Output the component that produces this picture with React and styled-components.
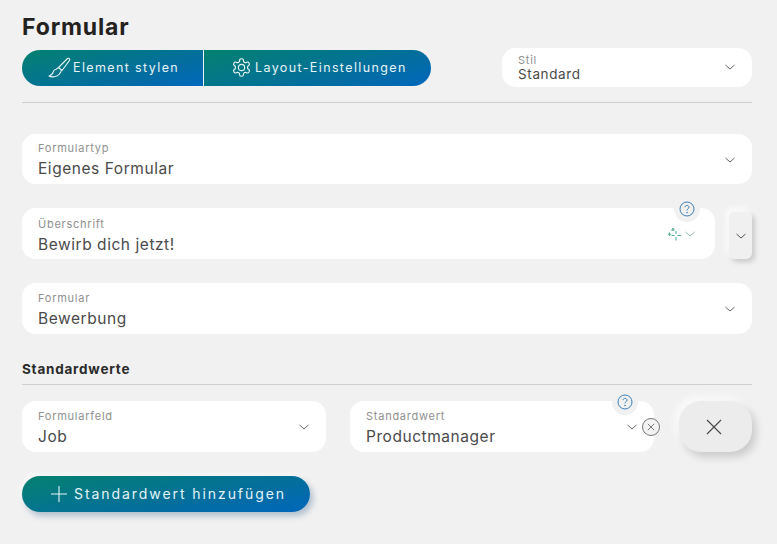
import React from "react";
import styled, { createGlobalStyle } from "styled-components";

const Global = createGlobalStyle`
  html, body { margin: 0; padding: 0; background: #f1f1f1; }
  body { font-family: Inter, "Open Sans", sans-serif; color: #3f3f3f; }
`;
const Page = styled.div`
  width: 777px; height: 544px; box-sizing: border-box; overflow: hidden;
  padding: 14px 25px 0 22px; display: flex; flex-direction: column; background: #f1f1f1;
`;
const Title = styled.h1`
  margin: 0; height: 26px; line-height: 26px; font-size: 23px; font-weight: 700; color: #242220; letter-spacing: .85px;
`;
const TopRow = styled.div`
  display: flex; justify-content: space-between; align-items: flex-start; margin-top: 8px;
`;
const Segments = styled.div`
  margin-top: 2px; display: flex; width: 409px; height: 36px; border-radius: 18px; overflow: hidden;
`;
const Segment = styled.button`
  flex: none; width: ${p => p.$w}px; height: 36px; border: 0; padding: 0 0 1px ${p => p.$pad}px;
  display: flex; align-items: center; gap: ${p => p.$gap}px; color: #e4f5f8; font: 400 12.5px Inter, sans-serif; letter-spacing: 1.38px;
  background: linear-gradient(165deg, #04816f 0%, #046f9b 60%, #0066bb 100%);
  & + & { border-left: 1px solid #e8f4f6; }
`;
const Field = styled.div`
  position: relative; box-sizing: border-box; width: ${p => p.$w ? p.$w + "px" : "100%"}; flex: none;
  height: ${p => p.$h || 51}px; background: #fff; border-radius: 14px;
  padding: ${p => p.$top}px 16px 0;
  display: flex; flex-direction: column;
`;
const Label = styled.span`
  font-size: 11px; line-height: 13px; color: #909090; letter-spacing: .75px;
`;
const Value = styled.span`
  margin-top: ${p => p.$compact ? 0 : 4}px; font-size: ${p => p.$compact ? 13.5 : 15.5}px; line-height: ${p => p.$compact ? 15 : 20}px; color: #4a4a4a; letter-spacing: ${p => p.$compact ? .62 : .55}px;
`;
const Chevron = styled.svg`
  position: absolute; right: ${p => p.$r}px; top: ${p => p.$t}px; width: 12px; height: 12px;
  fill: none; stroke: ${p => p.$c || "#666"}; stroke-width: 1;
`;
const Sparkle = styled.svg`
  position: absolute; right: 33px; top: 19px; width: 15px; height: 15px;
  fill: none; stroke: #4fa893; stroke-width: 1;
`;
const Rule = styled.div`
  height: 1px; background: #cfcfcf; margin-top: ${p => p.$mt}px; flex: none;
`;
const Stack = styled.div`
  margin-top: ${p => p.$mt}px; display: flex; align-items: flex-start;
`;
const Help = styled.div`
  position: absolute; width: 26px; height: 26px; right: ${p => p.$r}px; top: ${p => p.$t}px; border-radius: 50%;
  background: #f1f1f1; display: flex; align-items: center; justify-content: center;
`;
const SideButton = styled.button`
  margin-top: 4px; margin-left: 14px; width: 23px; height: 47px; border: 0; padding: 0; background: #f0f0f0;
  border-radius: 4px 5px 6px 5px; display: flex; align-items: center; justify-content: center;
  box-shadow: 3px 3px 5px rgba(0,0,0,.16), -3px -4px 6px rgba(255,255,255,.75);
`;
const Subheading = styled.h2`
  margin: 27px 0 0; font-size: 13.5px; line-height: 16px; font-weight: 700; color: #2a2a2a; letter-spacing: .78px;
`;
const SecondField = styled.div`
  margin-left: 24px;
`;
const CloseButton = styled.button`
  margin-left: 25px; width: 73px; height: 51px; border: 0; padding: 0 3px 0 0; background: #ececec; border-radius: 22px;
  display: flex; align-items: center; justify-content: center;
  box-shadow: 4px 5px 8px rgba(0,0,0,.16), -4px -4px 8px rgba(255,255,255,.7);
`;
const Clear = styled.svg`
  position: absolute; right: -7px; top: 16px; width: 20px; height: 20px; fill: #f3f3f3; stroke: #777; stroke-width: 1;
`;
const AddButton = styled.button`
  margin-top: 24px; align-self: flex-start; width: 288px; height: 36px; border: 0; padding: 0 0 1px 28px; border-radius: 18px;
  display: flex; align-items: center; gap: 6px; color: #e2f4f9; font: 400 14px Inter, sans-serif; letter-spacing: 1.93px;
  background: linear-gradient(170deg, #04816f 0%, #046f9b 60%, #0066bb 100%);
  box-shadow: 3px 4px 6px rgba(0,60,110,.28), -2px -2px 5px rgba(255,255,255,.7);
`;

const Chev = ({ r, t, c }) => (
  <Chevron $r={r} $t={t} $c={c} viewBox="0 0 12 12"><path d="M1.500 4 6 8l4.500-4" /></Chevron>
);
const HelpIcon = () => (
  <svg width="16" height="16" viewBox="0 0 16 16" fill="none" stroke="#3d7fb8" strokeWidth="1">
    <circle cx="8" cy="8" r="7" />
    <path d="M6 6.200C6 5 7 4.400 8 4.400s2 .7 2 1.800c0 1.500-2 1.500-2 3.200" />
    <circle cx="8" cy="11.500" r=".4" />
  </svg>
);

export default function App() {
  return (
    <Page>
      <Global />
      <Title>Formular</Title>
      <TopRow>
        <Segments>
          <Segment $w={181} $pad={25} $gap={2}>
            <svg width="24" height="22" viewBox="0 0 24 22" fill="none" stroke="#e8f6f8" strokeWidth="1.100" strokeLinejoin="round">
              <path d="M20.500 1.500c1.500-.8 2.800.6 2 2L15 13.500l-3.500-3z" />
              <path d="M11.500 10.500 9.500 12c-2 .4-3 1.600-3.400 3.200C5.600 17 4 18.500 2 19c3 1.500 8 1 10-1.500 1.200-1.300 2-2.600 2.500-4.300" />
            </svg>
            Element stylen
          </Segment>
          <Segment $w={228} $pad={27} $gap={3}>
            <svg width="21" height="21" viewBox="0 0 24 24" fill="none" stroke="#e8f6f8" strokeWidth="1.300" strokeLinejoin="round">
              <path d="M12.220 2h-.44a2 2 0 0 0-2 2v.18a2 2 0 0 1-1 1.730l-.43.25a2 2 0 0 1-2 0l-.15-.08a2 2 0 0 0-2.730.73l-.22.38a2 2 0 0 0 .73 2.730l.15.1a2 2 0 0 1 1 1.720v.51a2 2 0 0 1-1 1.740l-.15.09a2 2 0 0 0-.73 2.730l.22.38a2 2 0 0 0 2.730.73l.15-.08a2 2 0 0 1 2 0l.43.25a2 2 0 0 1 1 1.730V20a2 2 0 0 0 2 2h.44a2 2 0 0 0 2-2v-.18a2 2 0 0 1 1-1.730l.43-.25a2 2 0 0 1 2 0l.15.08a2 2 0 0 0 2.730-.73l.22-.39a2 2 0 0 0-.73-2.730l-.15-.08a2 2 0 0 1-1-1.740v-.5a2 2 0 0 1 1-1.740l.15-.09a2 2 0 0 0 .73-2.730l-.22-.38a2 2 0 0 0-2.730-.73l-.15.08a2 2 0 0 1-2 0l-.43-.25a2 2 0 0 1-1-1.730V4a2 2 0 0 0-2-2z" />
              <circle cx="12" cy="12" r="3.600" />
            </svg>
            Layout-Einstellungen
          </Segment>
        </Segments>
        <Field $w={250} $h={39} $top={6}>
          <Label>Stil</Label>
          <Value $compact>Standard</Value>
          <Chev r={16} t={13} />
        </Field>
      </TopRow>
      <Rule $mt={15} />
      <Stack $mt={31}>
        <Field $h={50} $top={8}>
          <Label>Formulartyp</Label>
          <Value>Eigenes Formular</Value>
          <Chev r={16} t={20} />
        </Field>
      </Stack>
      <Stack $mt={24}>
        <Field $w={693} $top={10}>
          <Label>Überschrift</Label>
          <Value>Bewirb dich jetzt!</Value>
          <Help $r={15} $t={-12}><HelpIcon /></Help>
          <Sparkle viewBox="0 0 15 15">
            <path d="M9 4v3M9 10v3.500M4.500 8.500H7.500M10.500 8.500h3.500" />
            <path d="M6 1 7.300 3.200H4.700zM2.500 5.500v3.500M.8 7.200h3.400" />
          </Sparkle>
          <Chev r={19} t={20} c="#8fbdb2" />
        </Field>
        <SideButton>
          <svg width="12" height="12" viewBox="0 0 12 12" fill="none" stroke="#555" strokeWidth="1"><path d="M1.500 4 6 8l4.500-4" /></svg>
        </SideButton>
      </Stack>
      <Stack $mt={24}>
        <Field $top={9}>
          <Label>Formular</Label>
          <Value>Bewerbung</Value>
          <Chev r={16} t={20} />
        </Field>
      </Stack>
      <Subheading>Standardwerte</Subheading>
      <Rule $mt={7} />
      <Stack $mt={16}>
        <Field $w={304} $top={9}>
          <Label>Formularfeld</Label>
          <Value>Job</Value>
          <Chev r={16} t={20} />
        </Field>
        <SecondField>
          <Field $w={304} $top={9}>
            <Label>Standardwert</Label>
            <Value>Productmanager</Value>
            <Help $r={16} $t={-12}><HelpIcon /></Help>
            <Chev r={16} t={20} />
            <Clear viewBox="0 0 20 20"><circle cx="10" cy="10" r="8.500" /><path d="M6.800 6.800l6.400 6.400M13.200 6.800l-6.400 6.400" /></Clear>
          </Field>
        </SecondField>
        <CloseButton>
          <svg width="16" height="16" viewBox="0 0 16 16" fill="none" stroke="#444" strokeWidth="1.100"><path d="M1 1l14 14M15 1 1 15" /></svg>
        </CloseButton>
      </Stack>
      <AddButton>
        <svg width="18" height="18" viewBox="0 0 18 18" fill="none" stroke="#e3f5f8" strokeWidth="1.100"><path d="M9 1v16M1 9h16" /></svg>
        Standardwert hinzufügen
      </AddButton>
    </Page>
  );
}
